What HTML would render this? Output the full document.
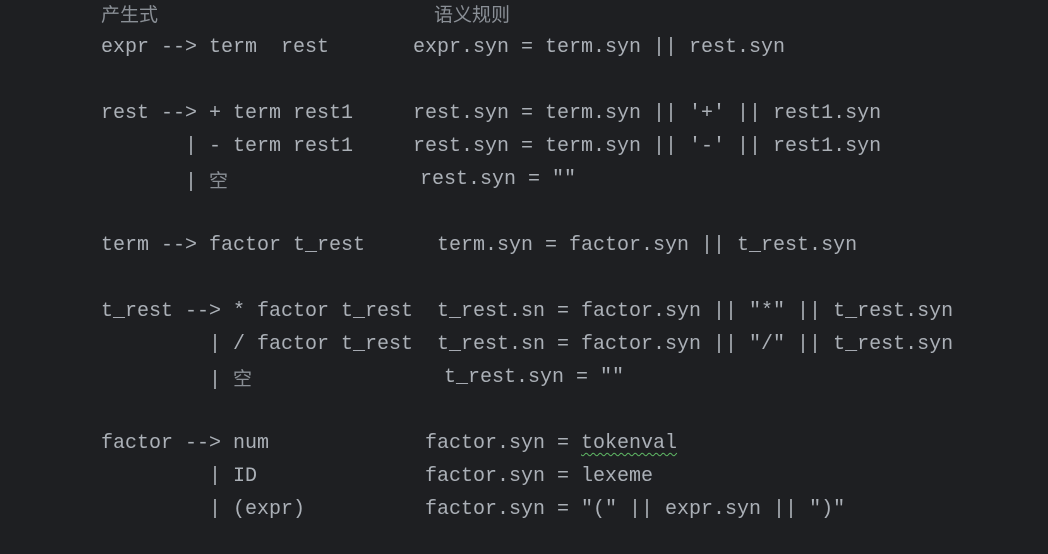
<!DOCTYPE html>
<html><head><meta charset="utf-8"><style>
html,body{margin:0;padding:0;background:#1e1f22;width:1048px;height:554px;overflow:hidden}
.t{position:absolute;white-space:pre;font-family:"Liberation Mono","Noto Sans CJK SC",monospace;font-size:20px;color:#abb0b7;line-height:33px;height:33px}
.c{font-family:"Noto Sans CJK SC",sans-serif;font-size:19px;color:#8a8f96}
.w{text-decoration:underline wavy #5fb865;text-underline-offset:4px;text-decoration-thickness:1px}
</style></head><body>
<div class="t c" style="left:101px;top:-3px">产生式</div>
<div class="t c" style="left:434px;top:-3px">语义规则</div>
<div class="t" style="left:101px;top:31px">expr --&gt; term  rest</div>
<div class="t" style="left:413px;top:31px">expr.syn = term.syn || rest.syn</div>
<div class="t" style="left:101px;top:97px">rest --&gt; + term rest1</div>
<div class="t" style="left:413px;top:97px">rest.syn = term.syn || '+' || rest1.syn</div>
<div class="t" style="left:185px;top:130px">| - term rest1</div>
<div class="t" style="left:413px;top:130px">rest.syn = term.syn || '-' || rest1.syn</div>
<div class="t" style="left:185px;top:163px">| <span class="c">空</span></div>
<div class="t" style="left:420px;top:163px">rest.syn = ""</div>
<div class="t" style="left:101px;top:229px">term --&gt; factor t_rest</div>
<div class="t" style="left:437px;top:229px">term.syn = factor.syn || t_rest.syn</div>
<div class="t" style="left:101px;top:295px">t_rest --&gt; * factor t_rest</div>
<div class="t" style="left:437px;top:295px">t_rest.sn = factor.syn || "*" || t_rest.syn</div>
<div class="t" style="left:209px;top:328px">| / factor t_rest</div>
<div class="t" style="left:437px;top:328px">t_rest.sn = factor.syn || "/" || t_rest.syn</div>
<div class="t" style="left:209px;top:361px">| <span class="c">空</span></div>
<div class="t" style="left:444px;top:361px">t_rest.syn = ""</div>
<div class="t" style="left:101px;top:427px">factor --&gt; num</div>
<div class="t" style="left:425px;top:427px">factor.syn = <span class="w">tokenval</span></div>
<div class="t" style="left:209px;top:460px">| ID</div>
<div class="t" style="left:425px;top:460px">factor.syn = lexeme</div>
<div class="t" style="left:209px;top:493px">| (expr)</div>
<div class="t" style="left:425px;top:493px">factor.syn = "(" || expr.syn || ")"</div>
</body></html>
